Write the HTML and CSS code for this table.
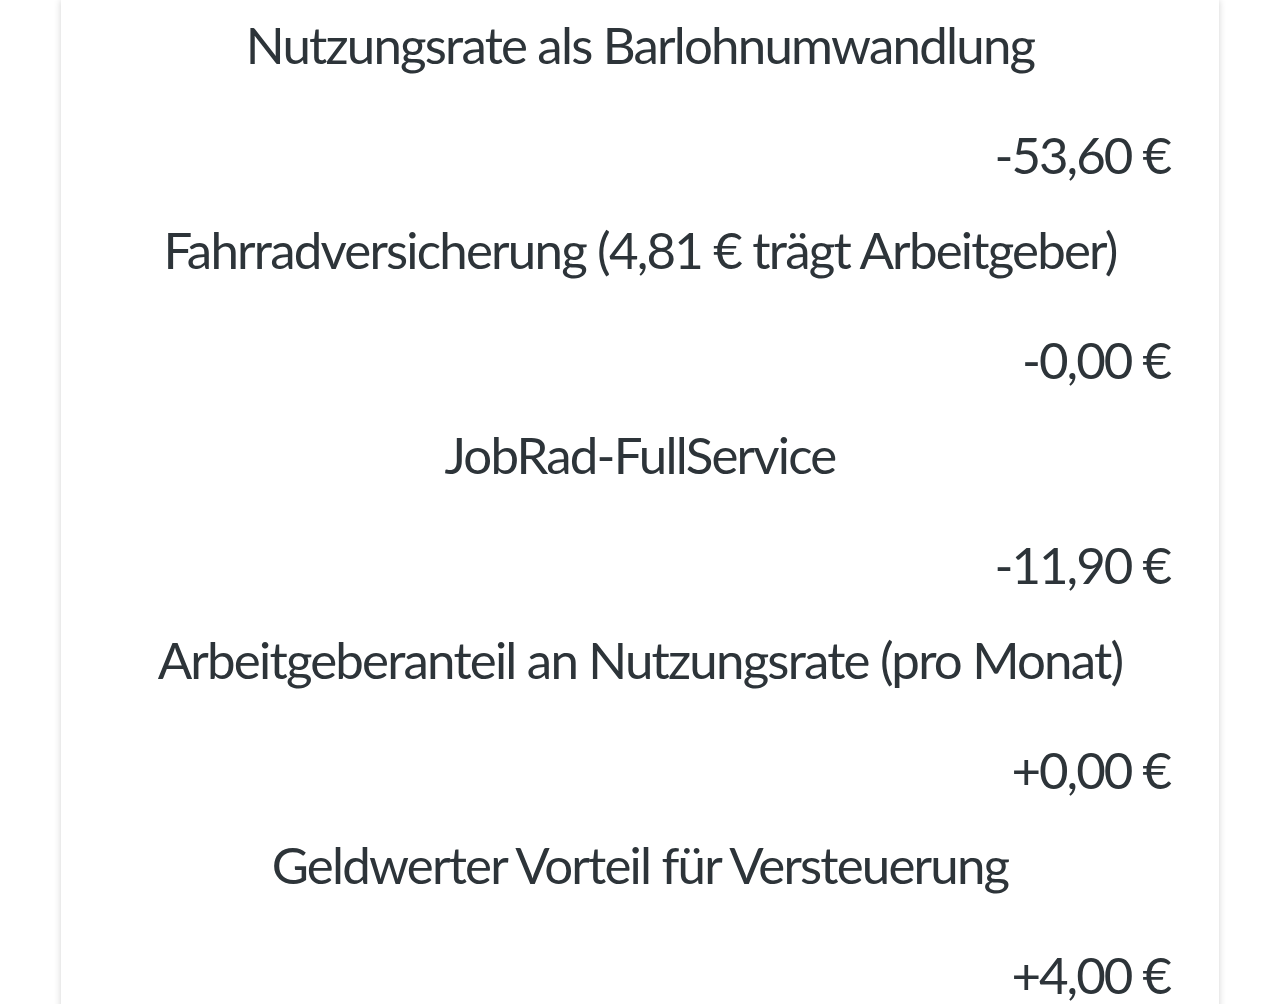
FILE: index.html
```html
<!DOCTYPE html>
<html lang="de">
<head>
<meta charset="utf-8">
<title>JobRad Rechner</title>
<link rel="stylesheet" href="styles.css">
</head>
<body>
<main class="card">
  <dl class="costs">
    <div class="item">
      <dt class="label">Nutzungsrate als Barlohnumwandlung</dt>
      <dd class="value">-53,60 €</dd>
    </div>
    <div class="item">
      <dt class="label">Fahrradversicherung (4,81 € trägt Arbeitgeber)</dt>
      <dd class="value">-0,00 €</dd>
    </div>
    <div class="item">
      <dt class="label">JobRad-FullService</dt>
      <dd class="value">-11,90 €</dd>
    </div>
    <div class="item">
      <dt class="label">Arbeitgeberanteil an Nutzungsrate (pro Monat)</dt>
      <dd class="value">+0,00 €</dd>
    </div>
    <div class="item">
      <dt class="label">Geldwerter Vorteil für Versteuerung</dt>
      <dd class="value">+4,00 €</dd>
    </div>
  </dl>
</main>
</body>
</html>
```
FILE: styles.css
```css
html, body {
  margin: 0;
  padding: 0;
  background: #ffffff;
}
body {
  font-family: Lato, "Noto Sans", sans-serif;
  color: #2d3439;
  overflow: hidden;
}
.card {
  margin: 0 65px 0 61px;
  background: #ffffff;
  box-shadow: 0 0 7px rgba(0, 0, 0, 0.18);
  padding: 15px 49px 40px 49px;
  min-height: 1100px;
}
.costs {
  margin: 0;
}
.item {
  margin: 0 0 35px 0;
}
.label {
  margin: 0;
  font-size: 51px;
  font-weight: 400;
  line-height: 60px;
  letter-spacing: -1.8px;
  text-align: center;
}
.value {
  margin: 50px 0 0 0;
  font-size: 51px;
  font-weight: 400;
  line-height: 60px;
  letter-spacing: -2px;
  text-align: right;
}
```
